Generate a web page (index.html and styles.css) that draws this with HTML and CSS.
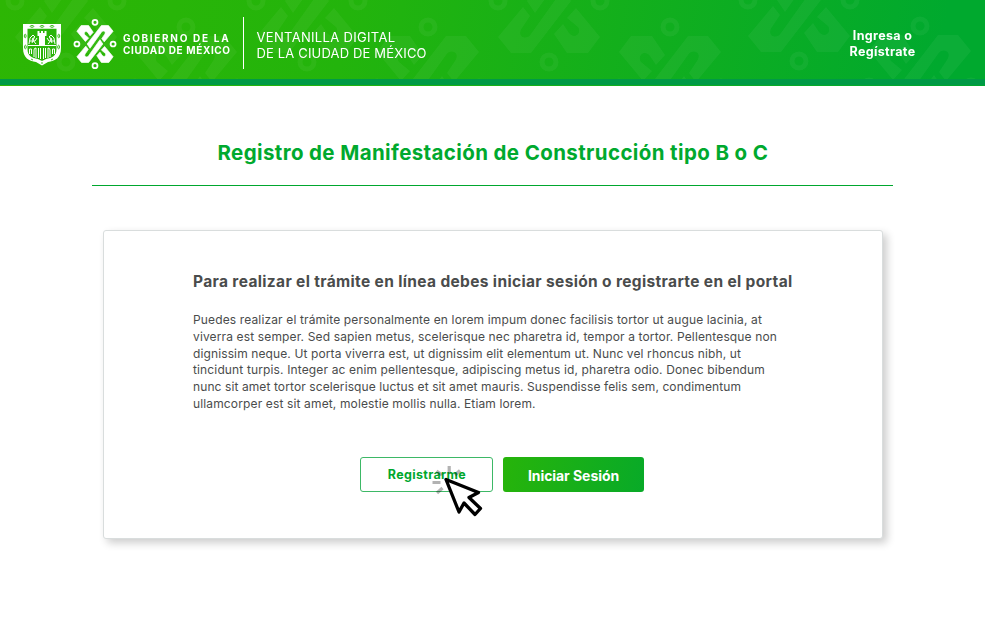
FILE: index.html
```html
<!DOCTYPE html>
<html lang="es">
<head>
<meta charset="utf-8">
<title>Ventanilla Digital de la Ciudad de México</title>
<link rel="stylesheet" href="styles.css">
</head>
<body>
<header class="header">
  <svg class="pattern" width="985" height="79" viewBox="0 0 985 79" aria-hidden="true">
    <defs>
      <g id="dots" fill="none" stroke-width="5">
        <circle cx="-51" cy="0" r="7"/><circle cx="51" cy="0" r="7"/><circle cx="0" cy="-61" r="7"/><circle cx="0" cy="61" r="7"/>
      </g>
      <g id="knot-half">
        <path d="M-51 36L-26 6L-19 15L-27 27C-33 36-22 40-18 33L14-12L22 0L-18 52H-38Z"/>
        <path d="M5 33L14 23L20 32C26 39 33 32 29 26L18 17L27 7L51 36L39 52H18Z"/>
      </g>
      <g id="knot"><use href="#knot-half"/><use href="#knot-half" transform="rotate(180)"/><use href="#dots"/></g>
    </defs>
    <g fill="#fff" stroke="none" opacity=".05">
      <use href="#knot" x="66" y="1"/><use href="#knot" x="307" y="1"/>
      <use href="#knot" x="549" y="1"/><use href="#knot" x="799" y="0"/>
      <use href="#knot" x="186" y="88"/><use href="#knot" x="428" y="88"/>
      <use href="#knot" x="670" y="88"/><use href="#knot" x="920" y="87"/>
    </g>
  </svg>
  <div class="brand">
    <svg class="shield" width="38" height="42" viewBox="0 0 38 42">
      <path d="M0 0H38V24C38 34 32 37 25 38L19 41.500L13 38C6 37 0 34 0 24Z" fill="#fff"/>
      <path d="M4.500 4.800H33.500V25C33.500 32 29 34 23 35L19 37L15 35C9 34 4.500 32 4.500 25Z" fill="#2ab40a"/>
      <path d="M14.500 7H16.500V9H18V7H20V9H21.500V7H23.500V12H22V21H16V12H14.500Z" fill="#fff"/>
      <path d="M5 21.500H33M6.500 30V25H8.500V30M11 33V26Q11 24 13 24V34M15.500 24V34M17.500 24V35M20.500 24V35M22.500 24V34M25 34V24Q27 24 27 26V33M29.500 30V25H31.500V30" fill="none" stroke="#fff" stroke-width="1"/>
      <path d="M6 20L7 14L10 11L12 13L9 15L13 20M32 20L31 14L28 11L26 13L29 15L25 20M7 17H12L14 14M31 17H26L24 14M9 19L11 14M29 19L27 14" fill="none" stroke="#fff" stroke-width="1"/>
      <g fill="none" stroke="#2ab40a" stroke-width=".9"><ellipse cx="9" cy="2.400" rx="1.800" ry=".9"/><ellipse cx="19" cy="2.400" rx="1.800" ry=".9"/><ellipse cx="29" cy="2.400" rx="1.800" ry=".9"/><ellipse cx="2.200" cy="12" rx=".9" ry="1.800"/><ellipse cx="35.800" cy="12" rx=".9" ry="1.800"/><ellipse cx="2.400" cy="23" rx=".9" ry="1.800"/><ellipse cx="35.600" cy="23" rx=".9" ry="1.800"/><path d="M8 35L10 36M28 36L30 35M18 39H20"/></g>
    </svg>
    <svg class="emblem" width="44" height="52" viewBox="-62 -73 124 146">
      <g class="bold-knot"><use href="#knot-half"/><use href="#knot-half" transform="rotate(180)"/></g>
      <use href="#dots"/>
    </svg>
    <div class="government"><span class="gov-a">GOBIERNO DE LA</span><span class="gov-b">CIUDAD DE MÉXICO</span></div>
    <div class="site"><span class="site-a">VENTANILLA DIGITAL</span><span class="site-b">DE LA CIUDAD DE MÉXICO</span></div>
  </div>
  <a class="login">Ingresa o<br>Regístrate</a>
</header>
<main>
  <h1 class="title">Registro de Manifestación de Construcción tipo B o C</h1>
  <section class="card">
    <h2 class="subtitle">Para realizar el trámite en línea debes iniciar sesión o registrarte en el portal</h2>
    <p class="copy">Puedes realizar el trámite personalmente en lorem impum donec facilisis tortor ut augue lacinia, at<br>viverra est semper. Sed sapien metus, scelerisque nec pharetra id, tempor a tortor. Pellentesque non<br><span class="tight">dignissim neque. Ut porta viverra est, ut dignissim elit elementum ut. Nunc vel rhoncus nibh, ut</span><br>tincidunt turpis. Integer ac enim pellentesque, adipiscing metus id, pharetra odio. Donec bibendum<br><span class="tighter">nunc sit amet tortor scelerisque luctus et sit amet mauris. Suspendisse felis sem, condimentum</span><br>ullamcorper est sit amet, molestie mollis nulla. Etiam lorem.</p>
    <div class="actions">
      <button class="button outline">Registrarme
        <svg class="cursor" width="54" height="54" viewBox="430 464 54 54" aria-hidden="true">
          <path d="M449.200 466V473.500M460 470.500L455 475M432.500 482.500H440.500M437 493L442.500 488M436.500 471L442 475" fill="none" stroke="#000" stroke-opacity=".3" stroke-width="3.200"/>
          <path d="M446 479.500L478.500 492.500L469 497.500L480.500 508.500L475 514.500L464 503L459 512Z" fill="#fff" stroke="#000" stroke-width="3.300" stroke-linejoin="round"/>
        </svg>
      </button>
      <button class="button solid">Iniciar Sesión</button>
    </div>
  </section>
</main>
</body>
</html>
```
FILE: styles.css
```css
* { box-sizing: border-box; }
html { background: #fff; }
body { margin: 0; min-height: 642px; color: #4a4c4c; font-family: Inter, "Liberation Sans", sans-serif; }
.header { position: relative; display: flex; justify-content: space-between; height: 86px; background: linear-gradient(100deg, #2db604 0%, #23b40c 35%, #00a92e 95%); color: #fff; }
.header::after { content: ""; position: absolute; left: 0; right: 0; top: 79px; height: 6px; background: #009a46; }
.pattern { position: absolute; left: 0; top: 0; }
#dots { stroke: #fff; }
.brand { position: relative; display: flex; align-items: flex-start; padding-left: 23px; }
.shield { margin-top: 24px; }
.emblem { margin: 18px 0 0 11.500px; }
.bold-knot { fill: #fff; stroke: #fff; stroke-width: 2; }
.government { display: flex; flex-direction: column; width: 121px; height: 52px; margin: 17px 0 0 6.500px; padding-top: 15px; border-right: 1px solid #fff; font-size: 10px; font-weight: 700; line-height: 12px; white-space: nowrap; }
.gov-a { letter-spacing: 1.68px; }
.gov-b { letter-spacing: .62px; }
.site { display: flex; flex-direction: column; margin: 28.500px 0 0 12.500px; font-size: 13px; line-height: 16px; white-space: nowrap; }
.site-a { letter-spacing: .32px; }
.site-b { letter-spacing: .16px; }
.login { position: relative; width: 100px; margin: 28px 52.500px 0 0; font-size: 12.500px; font-weight: 700; line-height: 16px; letter-spacing: .35px; text-align: center; }
.title { width: 801px; height: 100px; margin: 0 0 0 92.400px; padding-top: 55px; border-bottom: 1px solid #00a72e; color: #00a92e; font-size: 20.500px; font-weight: 700; line-height: 24px; letter-spacing: .38px; text-align: center; white-space: nowrap; }
.card { width: 780px; height: 309px; margin: 44px 0 0 103px; padding: 42px 89px 0; border: 1px solid #d9dddd; border-radius: 3px; box-shadow: 4px 4px 8px rgba(0,0,0,.2); background: #fff; }
.subtitle { margin: 0; font-size: 15.500px; font-weight: 700; line-height: 18px; letter-spacing: .35px; white-space: nowrap; }
.copy { margin: 21px 0 0; font-size: 12px; line-height: 16.800px; letter-spacing: .139px; white-space: nowrap; }
.tight { letter-spacing: .118px; }
.tighter { letter-spacing: .098px; }
.actions { display: flex; gap: 10px; margin: 44.500px 0 0 167px; }
.button { position: relative; height: 35px; padding: 0; border-radius: 3px; font-family: inherit; font-weight: 700; }
.outline { width: 133px; border: 1px solid #3db866; background: #fff; color: #00a72e; font-size: 12.500px; letter-spacing: .34px; padding-left: 1px; }
.solid { width: 141px; border: 0; background: linear-gradient(100deg, #27b40a, #08aa28); color: #fff; font-size: 14px; letter-spacing: -.06px; padding-top: 2px; }
.cursor { position: absolute; left: 69px; top: 6px; }
```
